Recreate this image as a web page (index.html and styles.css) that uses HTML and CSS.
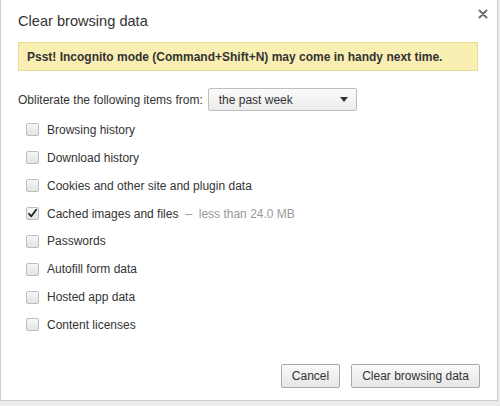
FILE: index.html
```html
<!DOCTYPE html>
<html>
<head>
<meta charset="utf-8">
<link rel="stylesheet" href="styles.css">
</head>
<body>
<div class="dialog">
  <div class="title">Clear browsing data</div>
  <button class="close" aria-label="Close">
    <svg width="10" height="10" viewBox="0 0 10 10"><path d="M1.5 1.5 L8.5 8.5 M8.5 1.5 L1.5 8.5" stroke="#6f6f6f" stroke-width="2" stroke-linecap="round"/></svg>
  </button>
  <div class="banner">Psst! Incognito mode (Command+Shift+N) may come in handy next time.</div>
  <div class="range">
    <span>Obliterate the following items from:</span>
    <div class="select"><span>the past week</span><span class="arrow"></span></div>
  </div>
  <ul class="options">
    <li><span class="cb"></span>Browsing history</li>
    <li><span class="cb"></span>Download history</li>
    <li><span class="cb"></span>Cookies and other site and plugin data</li>
    <li><span class="cb checked"><svg width="11" height="11" viewBox="0 0 11 11"><path d="M2 5.8 L4.3 8.3 L9.2 1.8" fill="none" stroke="#222" stroke-width="1.8" stroke-linejoin="round" stroke-linecap="round"/></svg></span>Cached images and files<span class="note">&ndash;&nbsp; less than 24.0 MB</span></li>
    <li><span class="cb"></span>Passwords</li>
    <li><span class="cb"></span>Autofill form data</li>
    <li><span class="cb"></span>Hosted app data</li>
    <li><span class="cb"></span>Content licenses</li>
  </ul>
  <div class="buttons">
    <button class="btn cancel">Cancel</button>
    <button class="btn clear">Clear browsing data</button>
  </div>
</div>
</body>
</html>
```
FILE: styles.css
```css
html, body {
  margin: 0;
  padding: 0;
}
body {
  background: #ececec;
  font-family: "Liberation Sans", Arial, Helvetica, sans-serif;
  color: #333;
  font-size: 12px;
}
.dialog {
  position: relative;
  width: 498px;
  height: 401px;
  background: #fff;
  border: 1px solid #cfcfcf;
  border-top: none;
  padding: 12px 17px 0 17px;
  box-sizing: border-box;
  display: flex;
  flex-direction: column;
}
.title {
  font-size: 14.6px;
  line-height: 18px;
  height: 18px;
  color: #333;
}
.close {
  position: absolute;
  top: 9px;
  right: 9px;
  width: 10px;
  height: 10px;
  padding: 0;
  border: none;
  background: none;
  display: block;
}
.close svg { display: block; }
.banner {
  margin: 12px 2px 0 0;
  height: 29px;
  box-sizing: border-box;
  background: #f9efb3;
  border: 1px solid #e9dc9a;
  padding-left: 8px;
  display: flex;
  align-items: center;
  font-weight: bold;
  font-size: 12px;
  color: #333;
}
.range {
  margin-top: 17px;
  height: 23px;
  display: flex;
  align-items: center;
  gap: 5px;
}
.select {
  width: 149px;
  height: 23px;
  box-sizing: border-box;
  border: 1px solid #bdbdbd;
  border-radius: 2px;
  background: linear-gradient(#fbfbfb, #ebebeb);
  display: flex;
  align-items: center;
  justify-content: space-between;
  padding: 0 8px 0 10px;
}
.arrow {
  width: 0;
  height: 0;
  border-left: 4px solid transparent;
  border-right: 4px solid transparent;
  border-top: 5px solid #333;
}
.options {
  list-style: none;
  margin: 5px 0 0 0;
  padding: 0 0 0 8px;
}
.options li {
  height: 27.86px;
  display: flex;
  align-items: center;
}
.cb {
  width: 13px;
  height: 13px;
  box-sizing: border-box;
  border: 1px solid #bcbcbc;
  border-radius: 2px;
  background: linear-gradient(#f7f7f7, #e4e4e4);
  margin-right: 8px;
  display: flex;
  align-items: center;
  justify-content: center;
}
.cb svg { display: block; margin-top: -1px; }
.note {
  color: #999;
  margin-left: 7px;
}
.buttons {
  margin-top: 25px;
  display: flex;
  justify-content: flex-end;
  gap: 11px;
}
.btn {
  height: 24px;
  box-sizing: border-box;
  border: 1px solid #a9a9a9;
  border-radius: 2px;
  background: linear-gradient(#fafafa, #e6e6e6);
  font-family: inherit;
  font-size: 12px;
  color: #333;
  padding: 0;
}
.cancel { width: 59px; }
.clear { width: 129px; }
```
